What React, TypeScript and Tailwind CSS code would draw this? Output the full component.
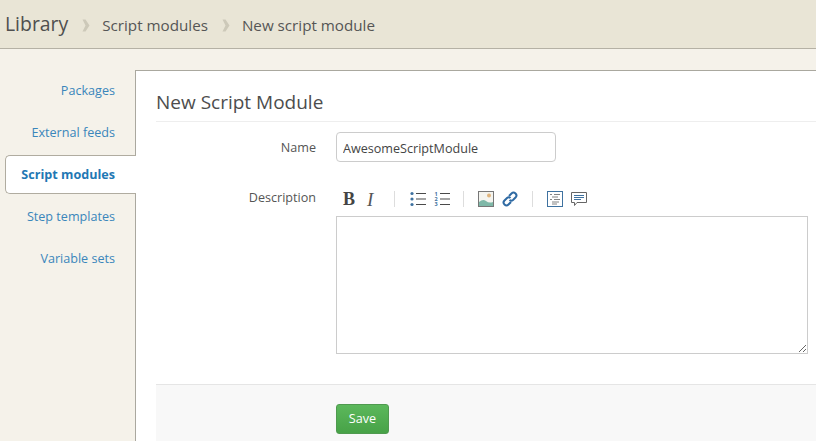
import React from "react";

const navItems = ["Packages", "External feeds", "Script modules", "Step templates", "Variable sets"];

function Chevron() {
  return (
    <svg width="8" height="13" viewBox="0 0 8 13" className="mt-[2px] mr-[12px] ml-[14px] shrink-0">
      <path d="M0.5 0.5 L3.5 0.5 L7.5 6.5 L3.5 12.5 L0.5 12.5 L3.5 6.5 Z" fill="#cdc9b9" />
    </svg>
  );
}

function Toolbar() {
  const blue = "#3f72a0";
  const dark = "#4a4a4a";
  const numeral = { fontSize: 5.5, fontWeight: 700, fill: blue, fontFamily: "Open Sans, sans-serif" };
  return (
    <div className="flex h-[18px] items-center pl-[7px]">
      <span className="w-[13px] font-['Liberation_Serif',serif] text-[18px] leading-none font-bold text-[#444]">B</span>
      <span className="ml-[11px] w-[9px] font-['Liberation_Serif',serif] text-[19px] leading-none text-[#555] italic">I</span>
      <div className="mr-[15px] ml-[18px] h-[16px] w-px bg-[#ddd]" />
      <svg width="16" height="16" viewBox="0 0 16 16">
        <circle cx="2" cy="2.5" r="1.6" fill={blue} />
        <circle cx="2" cy="8" r="1.6" fill={blue} />
        <circle cx="2" cy="13.5" r="1.6" fill={blue} />
        <path d="M6 2.5H16M6 8H16M6 13.5H16" stroke={dark} strokeWidth="1.2" />
      </svg>
      <svg width="16" height="16" viewBox="0 0 16 16" className="ml-[8px]">
        <text x="0.5" y="4.8" {...numeral}>1</text>
        <text x="0.5" y="10" {...numeral}>2</text>
        <text x="0.5" y="15.2" {...numeral}>3</text>
        <path d="M6 2.5H16M6 8H16M6 13.5H16" stroke={dark} strokeWidth="1.2" />
      </svg>
      <div className="mr-[14px] ml-[13px] h-[16px] w-px bg-[#ddd]" />
      <svg width="16" height="16" viewBox="0 0 16 16">
        <rect x="0.5" y="0.5" width="15" height="15" fill="#f4f4ef" stroke="#777" />
        <circle cx="11" cy="4.5" r="2" fill="#e0b47c" />
        <path d="M1 11 Q5 7.5 8 10 T15 11 V15 H1 Z" fill="#7fb8a8" />
      </svg>
      <svg width="16" height="16" viewBox="0 0 16 16" className="ml-[8px]" fill="none" stroke="#2f6aa3" strokeWidth="2">
        <path d="M7 5 L9.5 2.5 A2.6 2.6 0 0 1 13.5 6.5 L11 9 A2.6 2.6 0 0 1 7.5 9" />
        <path d="M9 11 L6.5 13.5 A2.6 2.6 0 0 1 2.5 9.5 L5 7 A2.6 2.6 0 0 1 8.5 7" />
      </svg>
      <div className="mr-[14px] ml-[14px] h-[16px] w-px bg-[#ddd]" />
      <svg width="16" height="16" viewBox="0 0 16 16">
        <rect x="0.5" y="0.5" width="15" height="15" fill="#fff" stroke="#3f72a0" />
        <path d="M3 3.5H5M7 3.5H13M5 6H11M3 8.5H5M7 8.5H13M5 11H12M5 13H10" stroke="#777" strokeWidth="0.9" />
      </svg>
      <svg width="16" height="16" viewBox="0 0 16 16" className="ml-[8px]" fill="none">
        <path d="M0.5 1.5 H15.5 V11.5 H6 L3.5 14.5 V11.5 H0.5 Z" stroke="#666" fill="#fff" />
        <path d="M3 4.5H13M3 6.5H13M3 8.5H10" stroke="#3f72a0" />
      </svg>
    </div>
  );
}

export default function App() {
  return (
    <div className="flex h-[441px] w-[816px] flex-col overflow-hidden bg-[#f5f2ea] font-['Open_Sans',sans-serif]">
      <header className="flex h-[49px] shrink-0 items-center border-b border-[#b5b1a5] bg-[#e9e5d6] pl-[5px] text-[#555]">
        <span className="text-[19.4px] leading-none text-[#4f4f4f]">Library</span>
        <Chevron />
        <span className="pt-[3px] text-[15.2px] leading-none">Script modules</span>
        <Chevron />
        <span className="pt-[3px] text-[15.2px] leading-none">New script module</span>
      </header>

      <div className="flex min-h-0 flex-1 pt-[21px]">
        <nav className="relative z-10 w-[136px] shrink-0 pt-[1px] pl-[5px] text-[12.6px]">
          {navItems.map((item) => {
            const active = item === "Script modules";
            return (
              <div
                key={item}
                className={
                  active
                    ? "mb-[3px] flex h-[39px] items-center justify-end rounded-l-[5px] border border-r-0 border-[#b0aca0] bg-white pt-[2px] pr-[21px] font-bold text-[#1f78b4]"
                    : "mb-[3px] flex h-[39px] items-center justify-end pt-[2px] pr-[21px] text-[#3a86bb]"
                }
              >
                {item}
              </div>
            );
          })}
        </nav>

        <main className="-ml-px flex min-w-0 flex-1 flex-col border-t border-l border-[#aaa89f] bg-white pl-[20px]">
          <h1 className="flex h-[51px] shrink-0 items-end border-b border-[#eeeeee] pb-[7px] text-[19px] leading-[24px] text-[#4d4d4d]">
            New Script Module
          </h1>

          <div className="mt-[10px] flex items-center text-[12.6px] text-[#555]">
            <label className="w-[160px] pt-[2px] text-right">Name</label>
            <input
              readOnly
              value="AwesomeScriptModule"
              className="ml-[20px] h-[30px] w-[220px] rounded-[4px] border border-[#cccccc] px-[6px] pt-[2px] text-[12.6px] text-[#444] outline-none"
            />
          </div>

          <div className="mt-[28px] flex items-start text-[12.6px] text-[#555]">
            <label className="w-[160px] text-right leading-[16px]">Description</label>
            <div className="ml-[20px] w-[472px]">
              <Toolbar />
              <textarea readOnly className="mt-[8px] block h-[138px] w-full border border-[#cccccc] bg-white outline-none" />
            </div>
          </div>

          <div className="mt-[30px] flex-1 border-t border-[#e5e5e5] bg-[#f8f8f8] pt-[19px] pl-[180px]">
            <button className="h-[30px] w-[53px] rounded-[3px] border border-[#4f9a4f] bg-gradient-to-b from-[#5cb85c] to-[#47a247] text-[12.6px] text-white">
              Save
            </button>
          </div>
        </main>
      </div>
    </div>
  );
}
